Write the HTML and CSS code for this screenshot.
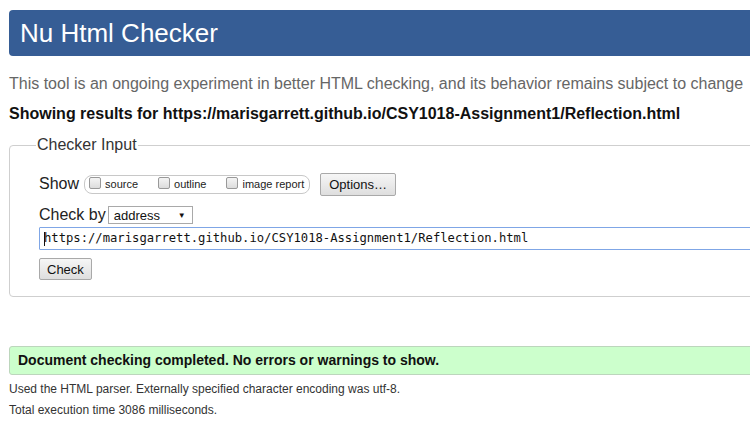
FILE: index.html
```html
<!DOCTYPE html>
<html>
<head>
<meta charset="utf-8">
<title>Nu Html Checker</title>
<link rel="stylesheet" href="styles.css">
</head>
<body>
<div class="page">
  <h1 class="banner">Nu Html Checker</h1>
  <p class="intro">This tool is an ongoing experiment in better HTML checking, and its behavior remains subject to change</p>
  <p class="showing">Showing results for https://marisgarrett.github.io/CSY1018-Assignment1/Reflection.html</p>
  <fieldset class="input-box">
    <legend>Checker Input</legend>
    <div class="row show-row">
      <span class="lbl">Show</span>
      <span class="pill">
        <label class="opt"><span class="cb"></span>source</label>
        <label class="opt"><span class="cb"></span>outline</label>
        <label class="opt"><span class="cb"></span>image report</label>
      </span>
      <span class="btn options">Options…</span>
    </div>
    <div class="row by-row">
      <span class="lbl">Check by</span>
      <span class="select">address<span class="arrow">▼</span></span>
    </div>
    <div class="url"><span class="caret"></span>https://marisgarrett.github.io/CSY1018-Assignment1/Reflection.html</div>
    <div class="row"><span class="btn check">Check</span></div>
  </fieldset>
  <div class="success">Document checking completed. No errors or warnings to show.</div>
  <p class="meta">Used the HTML parser. Externally specified character encoding was utf-8.</p>
  <p class="meta">Total execution time 3086 milliseconds.</p>
</div>
</body>
</html>
```

FILE: styles.css
```css
html, body {
  margin: 0;
  padding: 0;
  background: #fff;
  overflow: hidden;
}
body {
  font-family: "Liberation Sans", Arial, sans-serif;
  color: #111;
}
.page {
  width: 900px;
  padding: 10px 0 0 9px;
}
.banner {
  margin: 0;
  height: 46px;
  background: #365d95;
  color: #fff;
  font-weight: normal;
  font-size: 26px;
  line-height: 46px;
  padding-left: 11px;
  border-radius: 4px 0 0 4px;
}
.intro {
  margin: 19px 0 0;
  font-size: 16px;
  line-height: 18px;
  color: #666;
}
.showing {
  margin: 12px 0 0;
  font-size: 16px;
  line-height: 18px;
  font-weight: bold;
  color: #111;
}
.input-box {
  margin: 13px 0 0;
  border: 1px solid #cfcfcf;
  border-radius: 4px;
  padding: 8px 29px 16px 29px;
  min-width: 0;
}
.input-box legend {
  font-size: 16px;
  color: #333;
  padding: 0 1px;
  margin-left: -3px;
}
.row {
  display: flex;
  align-items: center;
}
.lbl {
  font-size: 16px;
  color: #222;
}
.show-row {
  margin-top: 11px;
  height: 22px;
}
.pill {
  display: inline-flex;
  align-items: center;
  margin-left: 5px;
  height: 17px;
  border: 1px solid #c8c8c8;
  border-radius: 8px;
  padding: 0 5px 0 4px;
}
.opt {
  display: inline-flex;
  align-items: center;
  font-size: 11px;
  color: #222;
  margin-right: 20px;
}
.opt:last-child {
  margin-right: 0;
}
.cb {
  display: inline-block;
  width: 10px;
  height: 10px;
  border: 1px solid #999;
  border-radius: 2px;
  background: linear-gradient(#f4f4f4, #dcdcdc);
  margin-right: 4px;
  margin-top: -3px;
}
.btn {
  display: inline-block;
  border: 1px solid #a9a9a9;
  border-radius: 2px;
  background: linear-gradient(#f6f6f6, #dedede);
  color: #111;
  font-size: 13px;
  line-height: 19px;
  padding: 1px 7px;
}
.options {
  margin-left: 10px;
  padding: 1px 8px 1px 8px;
}
.by-row {
  margin-top: 11px;
  height: 18px;
}
.select {
  display: inline-flex;
  align-items: center;
  justify-content: space-between;
  margin-left: 2px;
  width: 72px;
  height: 16px;
  border: 1px solid #a9a9a9;
  padding: 0 6px 0 5px;
  font-size: 13px;
  color: #111;
}
.arrow {
  font-size: 8px;
}
.url {
  display: flex;
  align-items: center;
  margin-top: 3px;
  height: 21px;
  border: 1px solid #7fa6e6;
  border-radius: 1px;
  padding-left: 4px;
  font-family: "DejaVu Sans Mono", "Liberation Mono", monospace;
  font-size: 12.2px;
  line-height: 21px;
  color: #111;
}
.caret {
  display: inline-block;
  width: 1px;
  height: 14px;
  background: #111;
  margin-right: -1px;
}
.check {
  margin-top: 8px;
  padding: 1px 7px 0 7px;
}
.success {
  margin-top: 49px;
  height: 27px;
  background: #ccffcc;
  border: 1px solid #bcd6bc;
  border-radius: 3px 0 0 3px;
  padding-left: 8px;
  font-size: 14px;
  font-weight: bold;
  line-height: 27px;
  color: #111;
}
.meta {
  margin: 7px 0 0;
  font-size: 12px;
  line-height: 14px;
  color: #333;
}
.meta + .meta {
  margin-top: 7px;
}
```
